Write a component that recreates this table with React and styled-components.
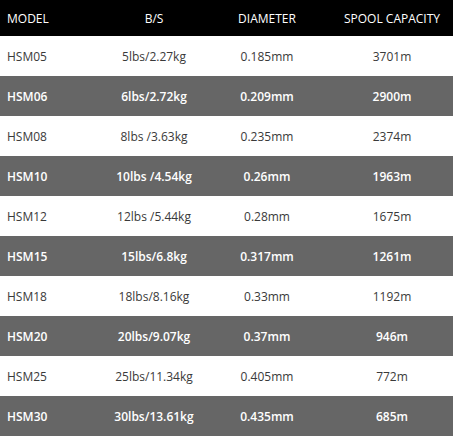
import React from "react";
import styled, { createGlobalStyle } from "styled-components";

const GlobalStyle = createGlobalStyle`
    html, body {
        margin: 0;
        padding: 0;
        background: #ffffff;
    }
`;

const rows = [
    ["HSM05", "5lbs/2.27kg", "0.185mm", "3701m"],
    ["HSM06", "6lbs/2.72kg", "0.209mm", "2900m"],
    ["HSM08", "8lbs /3.63kg", "0.235mm", "2374m"],
    ["HSM10", "10lbs /4.54kg", "0.26mm", "1963m"],
    ["HSM12", "12lbs /5.44kg", "0.28mm", "1675m"],
    ["HSM15", "15lbs/6.8kg", "0.317mm", "1261m"],
    ["HSM18", "18lbs/8.16kg", "0.33mm", "1192m"],
    ["HSM20", "20lbs/9.07kg", "0.37mm", "946m"],
    ["HSM25", "25lbs/11.34kg", "0.405mm", "772m"],
    ["HSM30", "30lbs/13.61kg", "0.435mm", "685m"],
];

const StyledTable = styled.div`
    width: 453px;
    font-family: "Open Sans", "Liberation Sans", sans-serif;
    font-size: 12px;
`;

const Row = styled.div`
    display: grid;
    grid-template-columns: 105px 98px 128px 122px;
    align-items: center;
    height: ${props => props.head ? 36 : 40}px;
    background-color: ${props => props.head ? "#000000" : props.dark ? "#666666" : "#ffffff"};
    color: ${props => props.head || props.dark ? "#ffffff" : "#3a3a3a"};
    font-weight: ${props => props.dark ? 600 : 400};
`;

const Cell = styled.div`
    text-align: ${props => props.left ? "left" : "center"};
    padding-left: ${props => props.left ? "7px" : "0"};
    white-space: nowrap;
`;

const App = () => {
    return (
        <>
            <GlobalStyle />
            <StyledTable>
                <Row head>
                    <Cell left>MODEL</Cell>
                    <Cell>B/S</Cell>
                    <Cell>DIAMETER</Cell>
                    <Cell>SPOOL CAPACITY</Cell>
                </Row>
                {rows.map((r, i) => (
                    <Row key={r[0]} dark={i % 2 === 1}>
                        <Cell left>{r[0]}</Cell>
                        <Cell>{r[1]}</Cell>
                        <Cell>{r[2]}</Cell>
                        <Cell>{r[3]}</Cell>
                    </Row>
                ))}
            </StyledTable>
        </>
    );
};

export default App;
